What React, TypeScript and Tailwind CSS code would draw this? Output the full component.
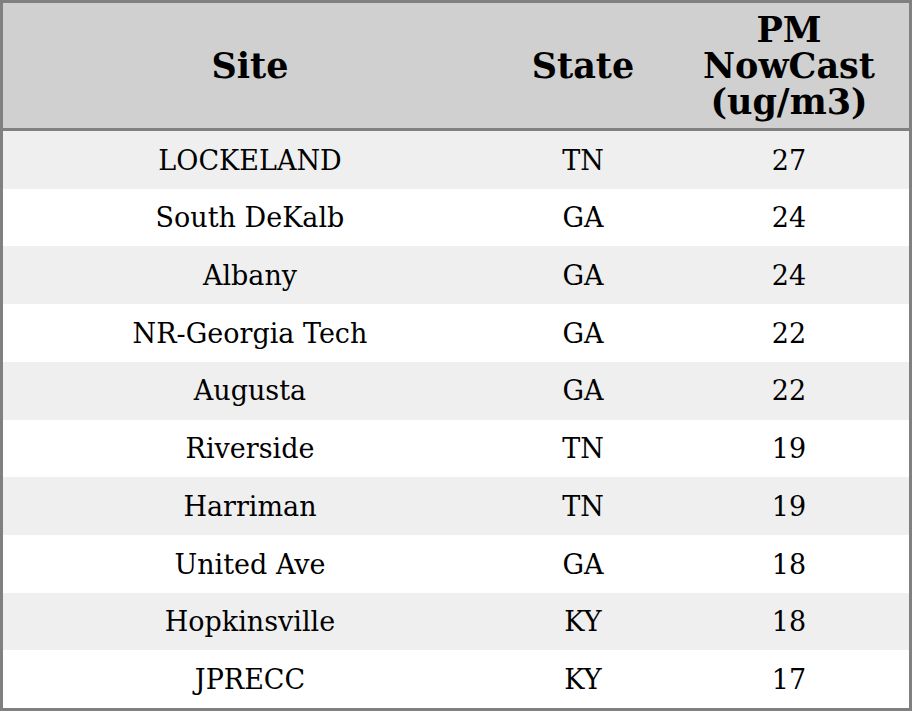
import React from "react";

const rows: [string, string, string][] = [
  ["LOCKELAND", "TN", "27"],
  ["South DeKalb", "GA", "24"],
  ["Albany", "GA", "24"],
  ["NR-Georgia Tech", "GA", "22"],
  ["Augusta", "GA", "22"],
  ["Riverside", "TN", "19"],
  ["Harriman", "TN", "19"],
  ["United Ave", "GA", "18"],
  ["Hopkinsville", "KY", "18"],
  ["JPRECC", "KY", "17"],
];

export default function App() {
  return (
    <div
      className="w-[912px] h-[711px] border-[3px] border-[#808080] bg-white text-black flex flex-col"
      style={{ fontFamily: '"DejaVu Serif", serif' }}
    >
      <div className="grid grid-cols-[494px_172px_240px] h-[128px] shrink-0 bg-[#d0d0d0] border-b-[3px] border-[#808080] text-[35px] font-bold leading-[36px]">
        <div className="flex items-center justify-center text-center">Site</div>
        <div className="flex items-center justify-center text-center">State</div>
        <div className="flex flex-col items-center justify-center text-center">
          <span>PM</span>
          <span>NowCast</span>
          <span>(ug/m3)</span>
        </div>
      </div>
      <div className="flex flex-col flex-1">
        {rows.map((r, i) => (
          <div
            key={i}
            className={
              "grid grid-cols-[494px_172px_240px] flex-1 pt-[2px] text-[27px] items-center text-center " +
              (i % 2 === 0 ? "bg-[#efefef]" : "bg-white")
            }
          >
            <div>{r[0]}</div>
            <div>{r[1]}</div>
            <div>{r[2]}</div>
          </div>
        ))}
      </div>
    </div>
  );
}
